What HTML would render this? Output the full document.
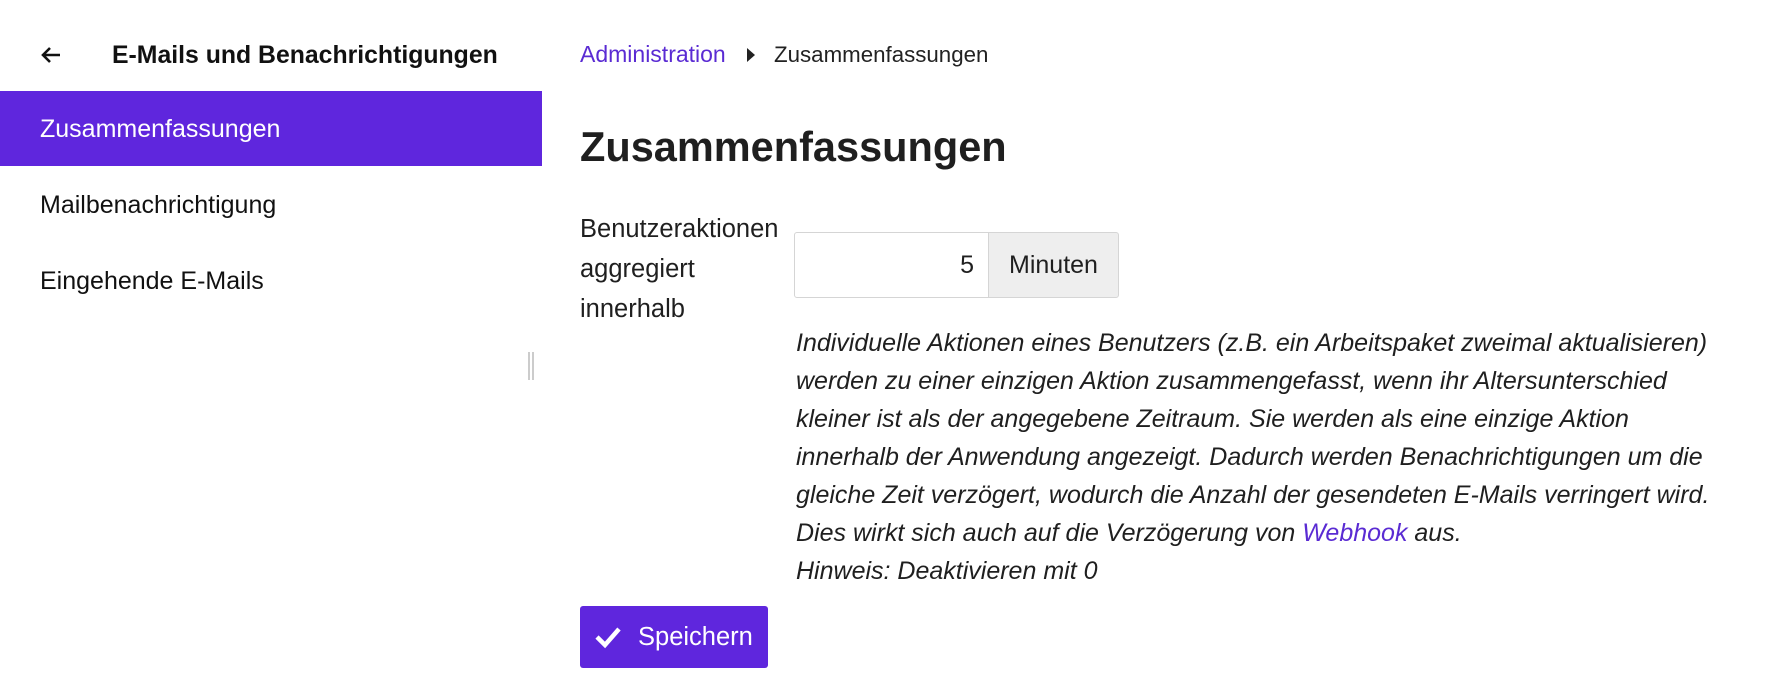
<!DOCTYPE html>
<html><head><meta charset="utf-8"><style>
*{box-sizing:border-box;margin:0;padding:0}
body{width:1765px;height:678px;overflow:hidden;background:#fff;font-family:"Liberation Sans",sans-serif;color:#1f1f1f;position:relative}
.abs{position:absolute;white-space:nowrap}
.item{position:absolute;left:40px;font-size:25px;line-height:30px}
.desc{position:absolute;left:796px;top:324px;font-size:25px;line-height:38px;font-style:italic;white-space:nowrap;color:#1f1f1f}
.desc a{color:#5a2bd3;text-decoration:none}
</style></head><body>
<svg class="abs" style="left:40px;top:44px" width="22" height="22" viewBox="0 0 22 22"><path d="M20 11H3M10 4L3 11L10 18" stroke="#111" stroke-width="2.6" fill="none"/></svg>
<div class="abs" style="left:112px;top:41px;font-size:24.8px;font-weight:bold;line-height:30px;color:#111">E-Mails und Benachrichtigungen</div>
<div class="abs" style="left:0;top:91px;width:542px;height:75px;background:#5f26dd"></div>
<div class="item abs" style="top:114px;color:#fff">Zusammenfassungen</div>
<div class="item abs" style="top:190px;color:#111">Mailbenachrichtigung</div>
<div class="item abs" style="top:266px;color:#111">Eingehende E-Mails</div>
<div class="abs" style="left:528px;top:352px;width:2px;height:28px;background:#ccc"></div>
<div class="abs" style="left:532px;top:352px;width:2px;height:28px;background:#ccc"></div>

<div class="abs" style="left:580px;top:39px;font-size:23px;line-height:30px;color:#5a2bd3">Administration</div>
<svg class="abs" style="left:746px;top:47px" width="10" height="16" viewBox="0 0 10 16"><path d="M1 1L9 8L1 15Z" fill="#222"/></svg>
<div class="abs" style="left:774px;top:40px;font-size:22.3px;line-height:30px;color:#222">Zusammenfassungen</div>

<div class="abs" style="left:580px;top:122px;font-size:41.5px;font-weight:bold;line-height:50px;color:#1f1f1f">Zusammenfassungen</div>

<div class="abs" style="left:580px;top:209px;font-size:25.5px;line-height:40px;color:#1f1f1f">Benutzeraktionen<br>aggregiert<br>innerhalb</div>

<div class="abs" style="left:794px;top:232px;width:195px;height:66px;border:1px solid #d5d5d5;border-radius:3px 0 0 3px;font-size:25px;line-height:64px;text-align:right;padding-right:14px">5</div>
<div class="abs" style="left:988px;top:232px;width:131px;height:66px;border:1px solid #d5d5d5;border-radius:0 3px 3px 0;background:#eee;font-size:25px;line-height:64px;text-align:center">Minuten</div>

<div class="desc">Individuelle Aktionen eines Benutzers (z.B. ein Arbeitspaket zweimal aktualisieren)<br>werden zu einer einzigen Aktion zusammengefasst, wenn ihr Altersunterschied<br>kleiner ist als der angegebene Zeitraum. Sie werden als eine einzige Aktion<br>innerhalb der Anwendung angezeigt. Dadurch werden Benachrichtigungen um die<br>gleiche Zeit verzögert, wodurch die Anzahl der gesendeten E-Mails verringert wird.<br>Dies wirkt sich auch auf die Verzögerung von <a>Webhook</a> aus.<br>Hinweis: Deaktivieren mit 0</div>

<div class="abs" style="left:580px;top:606px;width:188px;height:62px;background:#5f26dd;border-radius:3px"></div>
<svg class="abs" style="left:594px;top:625px" width="28" height="24" viewBox="0 0 28 24"><path d="M3 12L11 20L25 4" stroke="#fff" stroke-width="4.5" fill="none"/></svg>
<div class="abs" style="left:638px;top:622px;font-size:25.5px;line-height:30px;color:#fff">Speichern</div>
</body></html>
